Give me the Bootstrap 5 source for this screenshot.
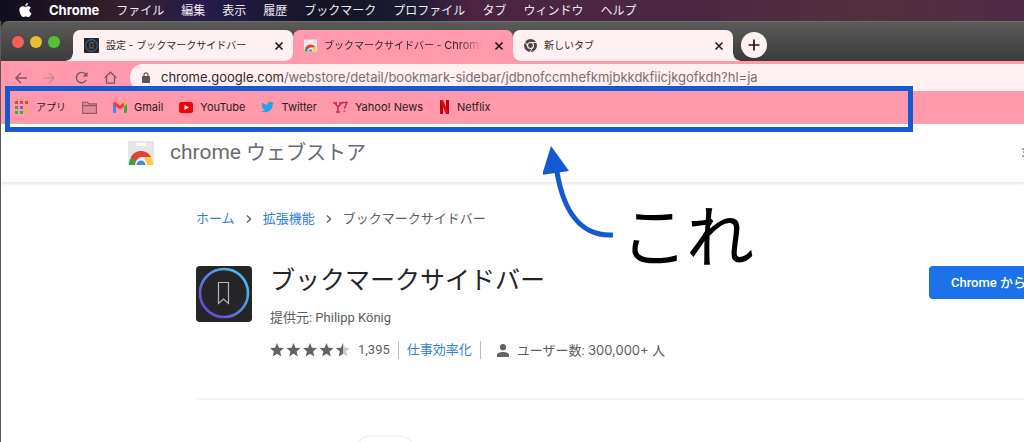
<!DOCTYPE html>
<html lang="ja">
<head>
<meta charset="utf-8">
<meta name="viewport" content="width=device-width, initial-scale=1">
<title>ブックマークサイドバー - Chrome ウェブストア</title>
<link href="https://cdn.jsdelivr.net/npm/bootstrap@5.3.0/dist/css/bootstrap.min.css" rel="stylesheet">
<style>
  :root { --pink: #ff99ab; --cream: #fff0f2; --mark: #1459d0; }
  body { font-family: Inter, "Noto Sans CJK JP", sans-serif; background: #fefefe; overflow: hidden; min-height: 100vh; }
  svg { display: block; flex: none; }
  a { text-decoration: none; }
  .latin { font-family: Roboto, "Noto Sans CJK JP", sans-serif; }

  .menubar { height: 21px; gap: 17px; padding-left: 19px; font-size: 12px; line-height: 20px; background: linear-gradient(90deg, #100d1c 0, #35202c 12%, #251c4c 20%, #151522 32%, #1b1b35 40%, #4a2440 46%, #4b2941 70%, #53303d 85%, #4e2b45 100%); }
  .menubar a { color: #f1ebf3; white-space: nowrap; }
  .menubar b { font-size: 13px; color: #fff; }

  .window-frame { border-left: 1px solid #5d5a5d; background: #1c1822; min-height: calc(100vh - 21px); }
  .tabstrip { height: 40px; padding-top: 8px; border-top: 1px solid #6d6d6d; border-top-left-radius: 8px; background: linear-gradient(#5b5b5a, #3c3b3b); }
  .lights { width: 72px; padding-left: 11px; gap: 6px; height: 24px; }
  .light { width: 12px; height: 12px; border-radius: 50%; }
  .tab { position: relative; height: 31px; flex: 0 1 220px; min-width: 0; background: var(--cream); border-radius: 7px 7px 0 0; padding: 0 9px 0 11px; font-size: 10px; color: #33282b; }
  .tab.current { background: var(--pink); z-index: 1; }
  .tab::before, .tab::after { content: ""; position: absolute; bottom: 0; width: 7px; height: 7px; }
  .tab::before { left: -7px; background: radial-gradient(circle at 0 0, transparent 6px, var(--cream) 7px); }
  .tab::after { right: -7px; background: radial-gradient(circle at 100% 0, transparent 6px, var(--cream) 7px); }
  .tab.current::before { background: radial-gradient(circle at 0 0, transparent 6px, var(--pink) 7px); }
  .tab.current::after { background: radial-gradient(circle at 100% 0, transparent 6px, var(--pink) 7px); }
  .tab-title { flex: 1 1 0; min-width: 0; overflow: hidden; white-space: nowrap; margin: 0 12px 0 7px; }
  .tab.current .tab-title { -webkit-mask-image: linear-gradient(90deg, #000 85%, transparent); mask-image: linear-gradient(90deg, #000 85%, transparent); }
  .plain { border: 0; background: none; padding: 0; line-height: 1; }
  .new-tab { width: 26px; height: 26px; border-radius: 50%; background: var(--cream); margin: 2px 0 0 8px; z-index: 2; }

  .toolbar { height: 30px; background: var(--pink); padding: 3px 0 0 14px; }
  .nav-buttons { gap: 16px; width: 115px; }
  .omnibox { height: 27px; background: var(--cream); border-radius: 13px 0 0 13px; padding-left: 12px; gap: 11px; font-size: 13px; color: #7b6c70; }
  .omnibox .host { color: #32282b; }
  .bookmarks { position: relative; height: 33px; background: var(--pink); padding-left: 14px; font-size: 11px; border-bottom: 1px solid #ddb0b8; }
  .bookmarks a { color: #2b1b1f; white-space: nowrap; gap: 7px; margin-right: 16px; }
  .bookmarks .kana { font-size: 10px; gap: 8px; }
  .callout-box { position: absolute; left: 4px; top: -5px; width: 88.8%; height: 46px; border: 5px solid var(--mark); pointer-events: none; z-index: 3; }

  .store { background: #fefefe; min-height: calc(100vh - 124px); overflow: hidden; }
  .store-head { height: 58px; padding-left: 127px; color: #6a6b6e; box-shadow: 0 1px 4px #0002; background: #fefefe; }
  .store-name { font-size: 20px; gap: 5px; margin-left: 16px; }
  .store-name span { font-size: 21px; }
  .store-body { position: relative; padding: 28px 0 0 195px; font-size: 13px; color: #5c5d60; }
  .crumbs { gap: 11px; line-height: 18px; }
  .store a { color: #3580ce; }
  .app-row { margin-top: 38px; }
  .app-info { margin-left: 18px; }
  .app-title { font-size: 25px; line-height: 30px; color: #232426; font-weight: 400; margin: 0; }
  .install { background: #1c72e8; border: 0; border-radius: 4px; height: 33px; padding: 0 22px; font-size: 13px; color: #fff; white-space: nowrap; margin-right: -24px; font-weight: 500; }
  .stats { margin-top: 13px; line-height: 18px; }
  .rule { width: 1px; height: 18px; background: #b9babc; }
  .divider { border-top: 2px solid #f3f3f3; margin-top: 38px; }
  .chip { width: 58px; height: 40px; border: 2px solid #f4f4f4; border-radius: 14px; margin: 35px 0 0 160px; background: #fff; }
  .note { position: absolute; left: 542px; top: -38px; }
  .note-text { font-size: 66px; font-weight: 300; line-height: 80px; color: #000; -webkit-text-stroke: 2px #000; stroke-linejoin: round; margin: 55px 0 0 6px; white-space: nowrap; }
</style>
</head>
<body>
<nav class="menubar d-flex align-items-center">
  <svg width="13" height="15" viewBox="0 0 13 15" fill="#fff"><path d="M8.9 0c.1 1.5-1.2 2.9-2.600 2.900C6.100 1.500 7.500.1 8.900 0zM6.500 3.900c.6 0 1.500-.7 2.700-.7 1 0 2.100.5 2.700 1.500-2.300 1.400-1.900 4.500.6 5.500-.5 1.400-1.800 3.800-3.100 3.800-1 0-1.400-.6-2.600-.6s-1.600.6-2.500.6C2.600 14-.6 8.300.7 5.200c.6-1.200 1.700-2 2.900-2 1.200 0 2 .7 2.900.7z"/></svg>
  <a href="#"><b>Chrome</b></a><a href="#">ファイル</a><a href="#">編集</a><a href="#">表示</a><a href="#">履歴</a><a href="#">ブックマーク</a><a href="#">プロファイル</a><a href="#">タブ</a><a href="#">ウィンドウ</a><a href="#">ヘルプ</a>
</nav>
<div class="window-frame">
  <div class="tabstrip d-flex">
    <div class="lights d-flex align-items-center">
      <span class="light" style="background:#f95f57"></span><span class="light" style="background:#e5bf30"></span><span class="light" style="background:#55c234"></span>
    </div>
    <div class="tab d-flex align-items-center">
      <svg width="15" height="15" viewBox="0 0 56 56"><rect width="56" height="56" rx="4" fill="#26242f"/><circle cx="28" cy="28" r="22" fill="none" stroke="#3b6585" stroke-width="4"/><path d="M22 17h12v23l-6-6-6 6z" fill="none" stroke="#777" stroke-width="3"/></svg>
      <span class="tab-title">設定 - ブックマークサイドバー</span>
      <button class="plain" aria-label="閉じる"><svg width="10" height="10" viewBox="0 0 10 10"><path d="M1.500 1.500l7 7m0-7l-7 7" stroke="#201518" stroke-width="1.700"/></svg></button>
    </div>
    <div class="tab current d-flex align-items-center">
      <svg width="13" height="13" viewBox="0 0 26 24"><use href="#storeIcon"/></svg>
      <span class="tab-title">ブックマークサイドバー - <span style="font-size:11px">Chrome</span></span>
      <button class="plain" aria-label="閉じる"><svg width="10" height="10" viewBox="0 0 10 10"><path d="M1.500 1.500l7 7m0-7l-7 7" stroke="#201518" stroke-width="1.700"/></svg></button>
    </div>
    <div class="tab d-flex align-items-center">
      <svg width="13" height="13" viewBox="0 0 26 26"><circle cx="13" cy="13" r="13" fill="#494345"/><circle cx="13" cy="13" r="6" fill="#494345" stroke="#fff0f2" stroke-width="2.200"/><path d="M13 7h12M8 16L2 6M18 16l-6 10" stroke="#fff0f2" stroke-width="1.800"/></svg>
      <span class="tab-title">新しいタブ</span>
      <button class="plain" aria-label="閉じる"><svg width="10" height="10" viewBox="0 0 10 10"><path d="M1.500 1.500l7 7m0-7l-7 7" stroke="#201518" stroke-width="1.500"/></svg></button>
    </div>
    <button class="new-tab plain d-flex align-items-center justify-content-center" aria-label="新しいタブを開く"><svg width="12" height="12" viewBox="0 0 12 12"><path d="M6 .5v11M.5 6h11" stroke="#201518" stroke-width="1.700"/></svg></button>
  </div>
  <div class="toolbar d-flex">
    <div class="nav-buttons d-flex align-items-center flex-shrink-0">
      <button class="plain" aria-label="戻る"><svg width="12" height="12" viewBox="0 0 12 12" fill="none" stroke="#7c5960" stroke-width="1.300"><path d="M12 6H1M6 .8L.9 6 6 11.200"/></svg></button>
      <button class="plain" aria-label="進む"><svg width="12" height="12" viewBox="0 0 12 12" fill="none" stroke="#c98490" stroke-width="1.200"><path d="M0 6h11M6 .8L11.100 6 6 11.200"/></svg></button>
      <button class="plain ms-1" aria-label="再読み込み"><svg width="13" height="13" viewBox="0 0 13 13"><path d="M11.200 9A5.200 5.200 0 1 1 10.400 3l1 1.200" fill="none" stroke="#7c5960" stroke-width="1.400"/><path d="M12.500.7v4.800H7.700z" fill="#7c5960"/></svg></button>
      <button class="plain" aria-label="ホーム"><svg width="13" height="13" viewBox="0 0 13 13" fill="none" stroke="#7c5960" stroke-width="1.300"><path d="M.8 6.800L6.500 1.200l5.700 5.600M2.500 5.500v6.700h8V5.500"/></svg></button>
    </div>
    <div class="omnibox d-flex align-items-center flex-grow-1">
      <svg width="8" height="11" viewBox="0 0 8 11"><rect y="4" width="8" height="7" rx="1" fill="#5c5154"/><path d="M2 5V2.800a2 2 0 0 1 4 0V5" fill="none" stroke="#5c5154" stroke-width="1.200"/></svg>
      <span class="text-nowrap"><span class="host">chrome.google.com</span>/webstore/detail/bookmark-sidebar/jdbnofccmhefkmjbkkdkfiicjkgofkdh?hl=ja</span>
    </div>
  </div>
  <nav class="bookmarks d-flex align-items-center">
    <a href="#" class="kana d-flex align-items-center"><svg width="13" height="13" viewBox="0 0 13 13"><path fill="#e34234" d="M0 0h3v3H0zM5 0h3v3H5zM10 0h3v3h-3z"/><path fill="#38a853" d="M0 5h3v3H0zM0 10h3v3H0z"/><path fill="#357fe2" d="M5 5h3v3H5z"/><path fill="#efb233" d="M10 5h3v3h-3zM10 10h3v3h-3z"/><path fill="#38a853" d="M5 10h3v3H5z"/></svg>アプリ</a>
    <a href="#" aria-label="フォルダ"><svg width="15" height="13" viewBox="0 0 15 13"><path d="M.6 11.500V1.300h5l1.400 1.600h7.400v9.500H.6zM.6 4.600h13.800" fill="#e18b98" stroke="#8d5c65" stroke-width="1.100"/></svg></a>
    <a href="#" class="d-flex align-items-center"><svg width="14" height="11" viewBox="0 0 14 11"><path fill="#4285f4" d="M0 2h3v9H1a1 1 0 0 1-1-1z"/><path fill="#34a853" d="M11 2h3v8a1 1 0 0 1-1 1h-2z"/><path fill="#ea4335" d="M0 2C0 0 2-.4 3 .5l4 3 4-3V4.500l-4 3-7-5z"/><path fill="#fbbc04" d="M11 .5C12-.4 14 0 14 2l-3 2.500z"/></svg>Gmail</a>
    <a href="#" class="d-flex align-items-center"><svg width="14" height="11" viewBox="0 0 14 11"><rect width="14" height="11" rx="2.500" fill="#f40008"/><path d="M5.500 3v5L10 5.500z" fill="#fff"/></svg>YouTube</a>
    <a href="#" class="d-flex align-items-center"><svg width="13" height="12" viewBox="0 0 24 20"><path fill="#2ba1e8" d="M24 2.400c-.9.400-1.800.7-2.800.8 1-.6 1.800-1.600 2.200-2.700-1 .6-2 1-3.100 1.200A4.900 4.900 0 0 0 11.900 6.200 14 14 0 0 1 1.700 1C.3 3.500 1 6.300 3.200 7.600c-.8 0-1.600-.2-2.200-.6 0 2.300 1.600 4.400 3.900 4.900-.7.200-1.500.2-2.200.1.600 2 2.400 3.400 4.600 3.400A9.900 9.900 0 0 1 0 17.500a14 14 0 0 0 21.500-12.600c1-.7 1.800-1.600 2.500-2.500z"/></svg>Twitter</a>
    <a href="#" class="d-flex align-items-center"><svg width="15" height="12" viewBox="0 0 15 12" fill="none" stroke="#dc2451"><path d="M0 2h4M6 2h4M2 2l3 4v5M8.500 2L5 6M3 11h4" stroke-width="1.600"/><path d="M9 1.500h5l-2.500 6M10.500 10H12" stroke-width="1.500"/></svg>Yahoo! News</a>
    <a href="#" class="d-flex align-items-center"><svg width="11" height="14" viewBox="0 0 11 14"><path d="M1 0h3v14H1zM7 0h3v14H7z" fill="#b30813"/><path d="M1 0h3l6 14H7z" fill="#e50914"/></svg>Netflix</a>
    <div class="callout-box"></div>
  </nav>
  <main class="store">
    <header class="store-head latin d-flex align-items-center">
      <svg width="26" height="24" viewBox="0 0 26 24"><g id="storeIcon"><path d="M0 0h26v24H0z" fill="#e6e6e8"/><rect x="8" y="2" width="10" height="3" rx="1.500" fill="#fff"/><path d="M1 24a12 13 0 0 1 3-9l6 9z" fill="#2fa455"/><path d="M3 16c4-8 16-8 20 0H13a7 7 0 0 0-5 5z" fill="#dc4437"/><path d="M23 16c1.500 2 2 5 2 8h-9l1-8z" fill="#fbcb43"/><path d="M7 24a6 6 0 0 1 12 0z" fill="#fff"/><path d="M8.500 24a4.500 4.500 0 0 1 9 0z" fill="#4687ee"/></g></svg>
      <div class="store-name d-flex align-items-center"><span>chrome</span>ウェブストア</div>
      <svg class="ms-auto" width="2" height="10" viewBox="0 0 2 10"><path d="M0 1h2M1 4h1M0 8h2" stroke="#88898b" stroke-width="1.400"/></svg>
    </header>
    <div class="store-body latin">
      <nav class="crumbs d-flex align-items-center">
        <a href="#">ホーム</a>
        <svg width="6" height="8" viewBox="0 0 6 8"><path d="M1 .5L4.500 4 1 7.500" fill="none" stroke="#606165" stroke-width="1.400"/></svg>
        <a href="#">拡張機能</a>
        <svg width="6" height="8" viewBox="0 0 6 8"><path d="M1 .5L4.500 4 1 7.500" fill="none" stroke="#606165" stroke-width="1.400"/></svg>
        <span>ブックマークサイドバー</span>
      </nav>
      <section class="app-row d-flex align-items-start">
        <svg width="56" height="56" viewBox="0 0 56 56"><defs><linearGradient id="ring" x1="0" y1="1" x2="1" y2="0"><stop offset=".2" stop-color="#6a50d8"/><stop offset=".8" stop-color="#4bb4e8"/></linearGradient></defs><rect width="56" height="56" rx="4" fill="#252527"/><circle cx="28" cy="27" r="24" fill="none" stroke="url(#ring)" stroke-width="2.600"/><path d="M22.500 16.500h10v21l-5-4.500-5 4.500z" fill="none" stroke="#b5b5b7" stroke-width="1.200"/></svg>
        <div class="app-info">
          <h1 class="app-title">ブックマークサイドバー</h1>
          <div class="mt-2 pt-1">提供元: Philipp König</div>
          <div class="stats d-flex align-items-center">
            <svg width="80" height="14" viewBox="0 0 80 14" fill="#626366"><defs><path id="st" d="M7 0l1.900 4.700 5.100.4-3.900 3.300 1.200 5L7 10.700 2.700 13.400l1.200-5L0 5.100l5.100-.4z"/></defs><use href="#st"/><use href="#st" x="16.500"/><use href="#st" x="33"/><use href="#st" x="49.500"/><use href="#st" x="66" fill="#c9cacc"/><path d="M73 0v10.700l-4.300 2.700 1.200-5L66 5.100l5.100-.4z"/></svg>
            <span class="ms-2">1,395</span><span class="rule mx-2"></span>
            <a href="#">仕事効率化</a><span class="rule mx-2"></span>
            <svg class="ms-2" width="12" height="13" viewBox="0 0 12 13" fill="#626366"><circle cx="6" cy="3.200" r="3.100"/><path d="M0 13v-2c0-4 12-4 12 0v2z"/></svg>
            <span class="ms-2">ユーザー数: <span style="font-family:Inter">300,000+</span> 人</span>
          </div>
        </div>
        <button class="install ms-auto">Chrome から</button>
      </section>
      <div class="divider"></div>
      <div class="chip"></div>
      <div class="note d-flex">
        <svg width="72" height="96" viewBox="0 0 72 96"><path d="M14 28C20 64 36 93 70 91" fill="none" stroke="#1459d0" stroke-width="5"/><path d="M8 2L26 27-1 31z" fill="#1459d0"/></svg>
        <div class="note-text">これ</div>
      </div>
    </div>
  </main>
</div>
<script src="https://cdn.jsdelivr.net/npm/bootstrap@5.3.0/dist/js/bootstrap.bundle.min.js"></script>
</body>
</html>
